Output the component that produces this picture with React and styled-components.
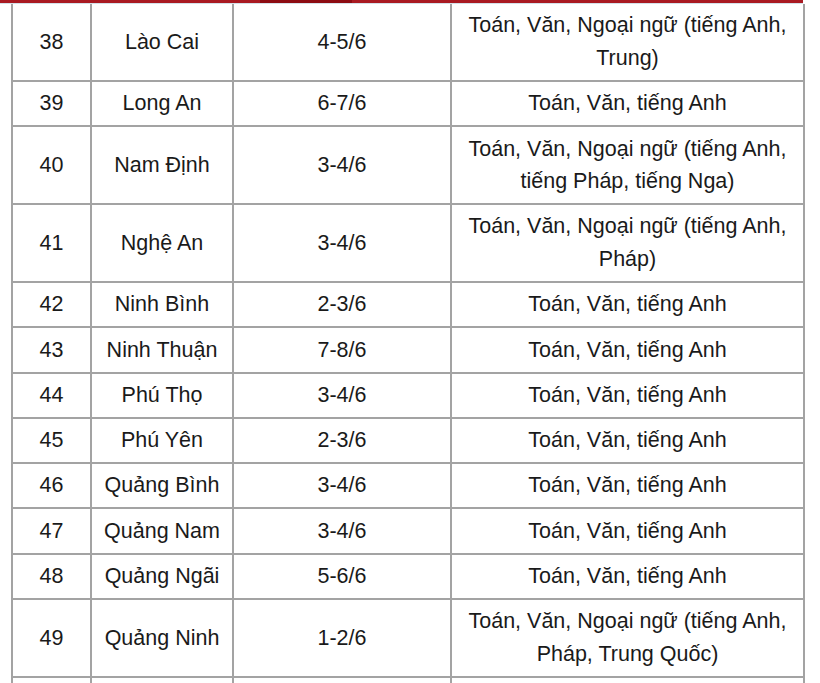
import styled, { createGlobalStyle } from "styled-components";

const rows = [
  { no: 38, name: "Lào Cai", date: "4-5/6", subjects: "Toán, Văn, Ngoại ngữ (tiếng Anh, Trung)" },
  { no: 39, name: "Long An", date: "6-7/6", subjects: "Toán, Văn, tiếng Anh" },
  { no: 40, name: "Nam Định", date: "3-4/6", subjects: "Toán, Văn, Ngoại ngữ (tiếng Anh, tiếng Pháp, tiếng Nga)" },
  { no: 41, name: "Nghệ An", date: "3-4/6", subjects: "Toán, Văn, Ngoại ngữ (tiếng Anh, Pháp)" },
  { no: 42, name: "Ninh Bình", date: "2-3/6", subjects: "Toán, Văn, tiếng Anh" },
  { no: 43, name: "Ninh Thuận", date: "7-8/6", subjects: "Toán, Văn, tiếng Anh" },
  { no: 44, name: "Phú Thọ", date: "3-4/6", subjects: "Toán, Văn, tiếng Anh" },
  { no: 45, name: "Phú Yên", date: "2-3/6", subjects: "Toán, Văn, tiếng Anh" },
  { no: 46, name: "Quảng Bình", date: "3-4/6", subjects: "Toán, Văn, tiếng Anh" },
  { no: 47, name: "Quảng Nam", date: "3-4/6", subjects: "Toán, Văn, tiếng Anh" },
  { no: 48, name: "Quảng Ngãi", date: "5-6/6", subjects: "Toán, Văn, tiếng Anh" },
  { no: 49, name: "Quảng Ninh", date: "1-2/6", subjects: "Toán, Văn, Ngoại ngữ (tiếng Anh, Pháp, Trung Quốc)" },
  { no: "", name: "", date: "", subjects: "" },
];

const GlobalStyle = createGlobalStyle`
  html, body {
    margin: 0;
    padding: 0;
    overflow: hidden;
    background: #fff;
  }
`;

const Page = styled.div`
  width: 820px;
  height: 683px;
  overflow: hidden;
`;

// thin red strip at the very top, with a darker tab in it
const TopBar = styled.div`
  display: flex;
  width: 803px;
  height: 3px;
  background: #a91a22;
`;

const BarSegment = styled.div`
  width: ${({ w }) => w}px;
  background: ${({ dark }) => (dark ? "#8c0b12" : "#a91a22")};
`;

const Shade = styled.div`
  width: 803px;
  height: 1px;
  background: #d3e2ea;
`;

const Wrap = styled.div`
  padding-left: 11px;
`;

const Table = styled.table`
  width: 792px;
  table-layout: fixed;
  border-collapse: collapse;
  font-family: "Liberation Sans", Arial, sans-serif;
  font-size: 21.5px;
  color: #1a1a1a;

  tr:first-child td {
    border-top: 0;
  }
`;

const Cell = styled.td`
  border: 2px solid #a3a3a3;
  padding: 5.3px 6px;
  line-height: 32.67px;
  text-align: center;
  vertical-align: middle;
`;

export default function App() {
  return (
    <Page>
      <GlobalStyle />
      <TopBar>
        <BarSegment w={260} />
        <BarSegment w={92} dark />
        <BarSegment w={451} />
      </TopBar>
      <Shade />
      <Wrap>
        <Table>
          <colgroup>
            <col style={{ width: 79 }} />
            <col style={{ width: 142 }} />
            <col style={{ width: 218 }} />
            <col style={{ width: 353 }} />
          </colgroup>
          <tbody>
            {rows.map((r, i) => (
              <tr key={i}>
                <Cell>{r.no || "\u00a0"}</Cell>
                <Cell>{r.name}</Cell>
                <Cell>{r.date}</Cell>
                <Cell>{r.subjects}</Cell>
              </tr>
            ))}
          </tbody>
        </Table>
      </Wrap>
    </Page>
  );
}
